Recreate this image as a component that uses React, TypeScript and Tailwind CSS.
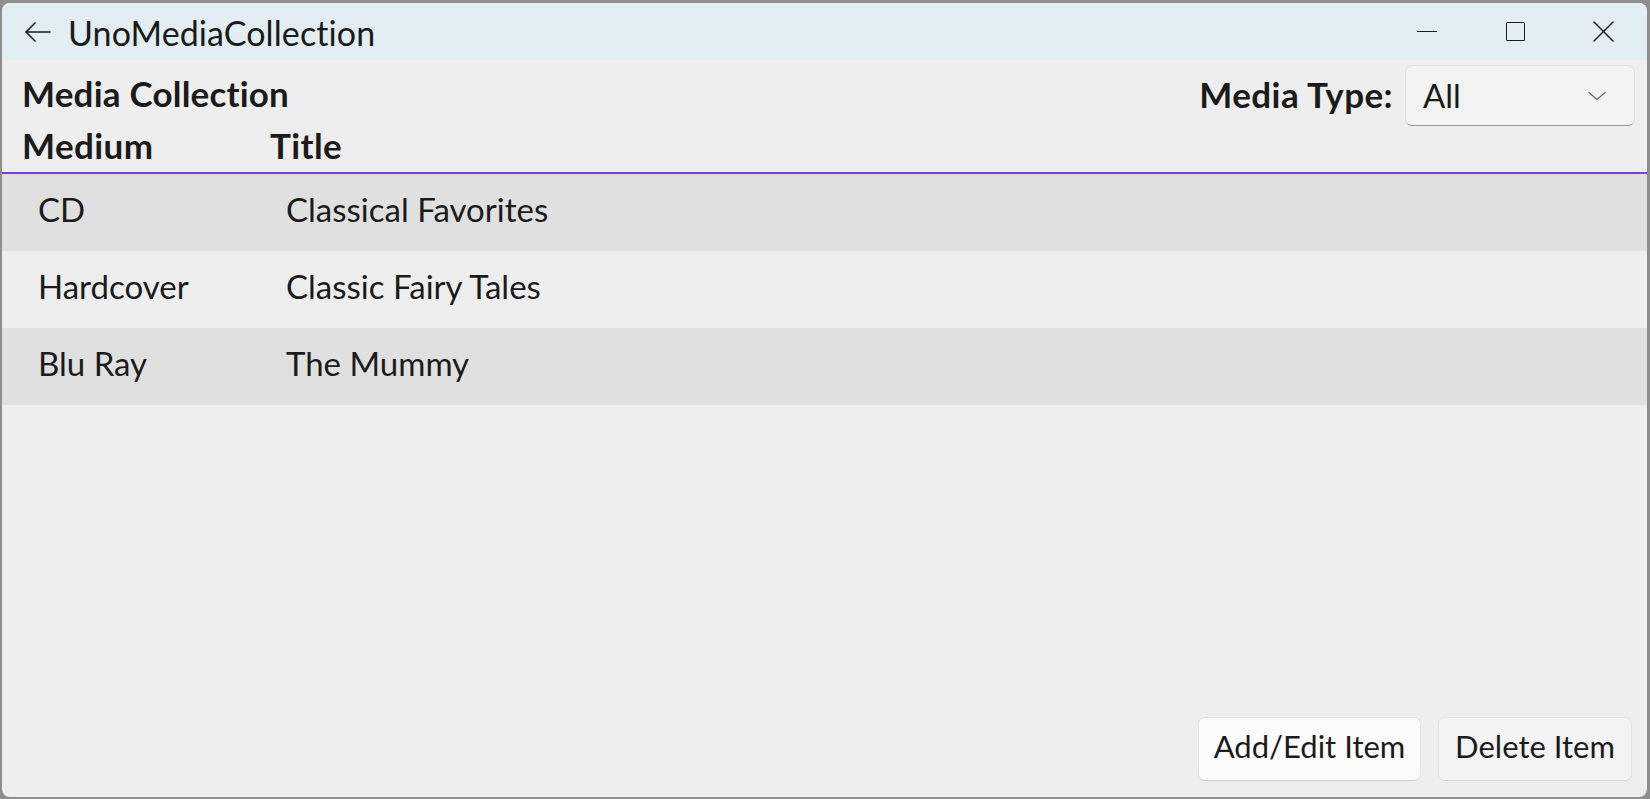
import React from "react";

const rows = [
  { medium: "CD", title: "Classical Favorites" },
  { medium: "Hardcover", title: "Classic Fairy Tales" },
  { medium: "Blu Ray", title: "The Mummy" },
];

function BackArrow() {
  return (
    <svg width="28" height="22" viewBox="0 0 28 22" fill="none" stroke="#1b1b1b" strokeWidth="1.6" strokeLinecap="round" strokeLinejoin="round">
      <path d="M2 11 H26" />
      <path d="M11 2 L2 11 L11 20" />
    </svg>
  );
}

export default function App() {
  return (
    <div
      className="w-[1650px] h-[799px] bg-[#8e8e8e] pt-[3px] pl-[2px] pr-[3px] pb-[2px] overflow-hidden [font-variant-ligatures:none]"
      style={{ fontFamily: "Lato, 'Noto Sans', sans-serif" }}
    >
      <div className="h-full flex flex-col rounded-[8px] overflow-hidden bg-[#eeeeee] text-[#1b1b1b]">
        {/* Title bar */}
        <div className="h-[57px] shrink-0 bg-[#e3eef2] flex items-center">
          <div className="ml-[22px] w-[28px] flex items-center">
            <BackArrow />
          </div>
          <div className="ml-[16px] text-[34px] leading-none tracking-[0.1px] pt-[2px]">UnoMediaCollection</div>
          <div className="ml-auto flex h-full">
            <div className="w-[88px] h-full flex items-center justify-center">
              <div className="w-[20px] h-[1.5px] bg-[#1b1b1b]" />
            </div>
            <div className="w-[88px] h-full flex items-center justify-center">
              <div className="w-[19px] h-[19px] border-[1.5px] border-[#1b1b1b] rounded-[1px]" />
            </div>
            <div className="w-[88px] h-full flex items-center justify-center">
              <svg width="21" height="21" viewBox="0 0 21 21" stroke="#1b1b1b" strokeWidth="1.5" strokeLinecap="round">
                <path d="M1 1 L20 20" />
                <path d="M20 1 L1 20" />
              </svg>
            </div>
          </div>
        </div>

        {/* Header row */}
        <div className="mt-[5px] h-[61px] shrink-0 flex items-center pl-[20px] pr-[12px]">
          <div className="text-[35px] font-bold leading-none tracking-[0.2px] pb-[5px]">Media Collection</div>
          <div className="ml-auto flex items-center h-full">
            <div className="text-[35px] font-bold leading-none tracking-[0.4px] pb-[2px]">Media Type:</div>
            <div className="ml-[12px] w-[230px] h-[61px] rounded-[7px] border border-[#e2e2e2] border-b-[#9a9a9a] bg-[#f3f3f3] flex items-center pl-[17px] pr-[28px]">
              <span className="text-[33px] leading-none">All</span>
              <svg className="ml-auto" width="18" height="10" viewBox="0 0 18 10" fill="none" stroke="#6e6e6e" strokeWidth="1.3" strokeLinecap="round" strokeLinejoin="round">
                <path d="M1 1.5 L9 8.5 L17 1.5" />
              </svg>
            </div>
          </div>
        </div>

        {/* Column headers */}
        <div className="h-[46px] shrink-0 flex items-center pb-[8px] pl-[20px]">
          <div className="w-[248px] text-[35px] font-bold leading-none tracking-[0.4px]">Medium</div>
          <div className="text-[35px] font-bold leading-none tracking-[0.4px]">Title</div>
        </div>
        <div className="h-[2px] shrink-0 bg-[#7d3cdc]" />

        {/* Rows */}
        <div className="flex flex-col">
          {rows.map((r, i) => (
            <div
              key={r.medium}
              className={
                "h-[77px] flex items-center pb-[7px] pl-[36px] text-[33px] leading-none " +
                (i % 2 === 0 ? "bg-[#e0e0e0]" : "bg-[#eeeeee]")
              }
            >
              <div className="w-[248px]">{r.medium}</div>
              <div>{r.title}</div>
            </div>
          ))}
        </div>

        <div className="flex-1" />

        {/* Buttons */}
        <div className="flex justify-end gap-[17px] pr-[15px] pb-[16px]">
          <button className="w-[223px] h-[64px] rounded-[7px] border border-[#e3e3e3] border-b-[#cfcfcf] bg-[#fbfbfb] text-[31px] leading-none pb-[5px] flex items-center justify-center">
            Add/Edit Item
          </button>
          <button className="w-[194px] h-[64px] rounded-[7px] border border-[#e3e3e3] border-b-[#d6d6d6] bg-[#f3f3f3] text-[31px] leading-none pb-[5px] flex items-center justify-center">
            Delete Item
          </button>
        </div>
      </div>
    </div>
  );
}
